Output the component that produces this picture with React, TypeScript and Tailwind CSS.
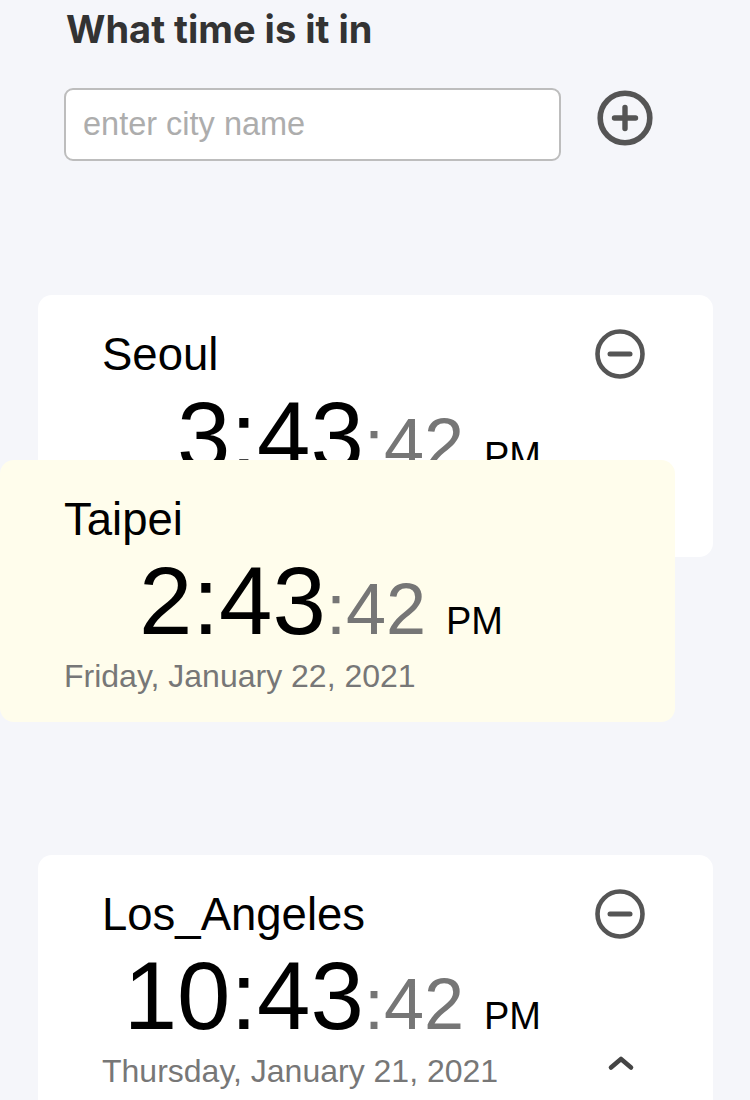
import React from 'react';

type City = {
  name: string;
  hm: string;
  sec: string;
  ampm: string;
  date: string;
};

const cities: City[] = [
  { name: 'Seoul', hm: '3:43', sec: '42', ampm: 'PM', date: 'Friday, January 22, 2021' },
  { name: 'Taipei', hm: '2:43', sec: '42', ampm: 'PM', date: 'Friday, January 22, 2021' },
  { name: 'Los_Angeles', hm: '10:43', sec: '42', ampm: 'PM', date: 'Thursday, January 21, 2021' },
];

const PlusCircle = () => (
  <svg width="56" height="56" viewBox="0 0 56 56" fill="none" stroke="#555555" strokeLinecap="round">
    <circle cx="28" cy="28" r="24.8" strokeWidth="5.6" />
    <path d="M17.5 28h21M28 17.5v21" strokeWidth="5.4" />
  </svg>
);

const MinusCircle = () => (
  <svg width="50" height="50" viewBox="0 0 50 50" fill="none" stroke="#555555" strokeLinecap="round">
    <circle cx="25" cy="25" r="22.5" strokeWidth="4.6" />
    <path d="M15 25h20" strokeWidth="5" />
  </svg>
);

const ChevronUp = () => (
  <svg width="28" height="16" viewBox="0 0 28 16" fill="none" stroke="#444444" strokeWidth="4.6" strokeLinecap="round" strokeLinejoin="round">
    <path d="M4 12.5L14 4l10 8.5" />
  </svg>
);

const CityCard: React.FC<{ city: City; dragging?: boolean; className?: string }> = ({ city, dragging, className }) => (
  <div
    className={`w-[675px] h-[262px] rounded-[14px] font-['Liberation_Sans',Arial,sans-serif] ${
      dragging ? 'bg-[#fffdec]' : 'bg-white'
    } ${className ?? ''}`}
  >
    <div className="flex items-start justify-between pl-[64px] pr-[68px] pt-[34px] h-[84px]">
      <span className="mt-[3px] text-[45.5px] leading-none text-black">{city.name}</span>
      {!dragging && <MinusCircle />}
    </div>
    <div className="w-[503px] mt-[9px] text-right text-[96px] leading-none text-black whitespace-nowrap">
      {city.hm}
      <span className="text-[72px] leading-none text-[#767676]">:{city.sec} </span>
      <span className="text-[38px] leading-none text-black">{city.ampm}</span>
    </div>
    <div className="flex items-start justify-between pl-[64px] pr-[78px] mt-[11px]">
      <span className="text-[32px] leading-none text-[#777777] whitespace-nowrap">{city.date}</span>
      {!dragging && <ChevronUp />}
    </div>
  </div>
);

export default function App() {
  return (
    <div className="relative h-[1100px] overflow-hidden bg-[#f5f6fa]">
      <div className="pl-[66px] pt-[10px]">
        <h1 className="font-['Inter',sans-serif] font-bold text-[38px] leading-none text-[#333333]">
          What time is it in
        </h1>
        <div className="flex items-start mt-[40px]">
          <div className="-ml-[2px] w-[497px] h-[73px] rounded-[9px] border-2 border-[#bdbdbd] bg-white flex items-center pl-[17px]">
            <input
              placeholder="enter city name"
              className="w-full bg-transparent outline-none text-[32.5px] font-['Liberation_Sans',Arial,sans-serif] text-[#333] placeholder:text-[#adadad]"
            />
          </div>
          <button className="ml-[36px] mt-[2px]">
            <PlusCircle />
          </button>
        </div>
      </div>

      <div className="flex flex-col gap-[18px] pl-[38px] mt-[134px]">
        <CityCard city={cities[0]} />
        <div className="h-[262px]" />
        <CityCard city={cities[2]} />
      </div>

      {/* card being dragged */}
      <CityCard city={cities[1]} dragging className="absolute left-0 top-[460px]" />
    </div>
  );
}
